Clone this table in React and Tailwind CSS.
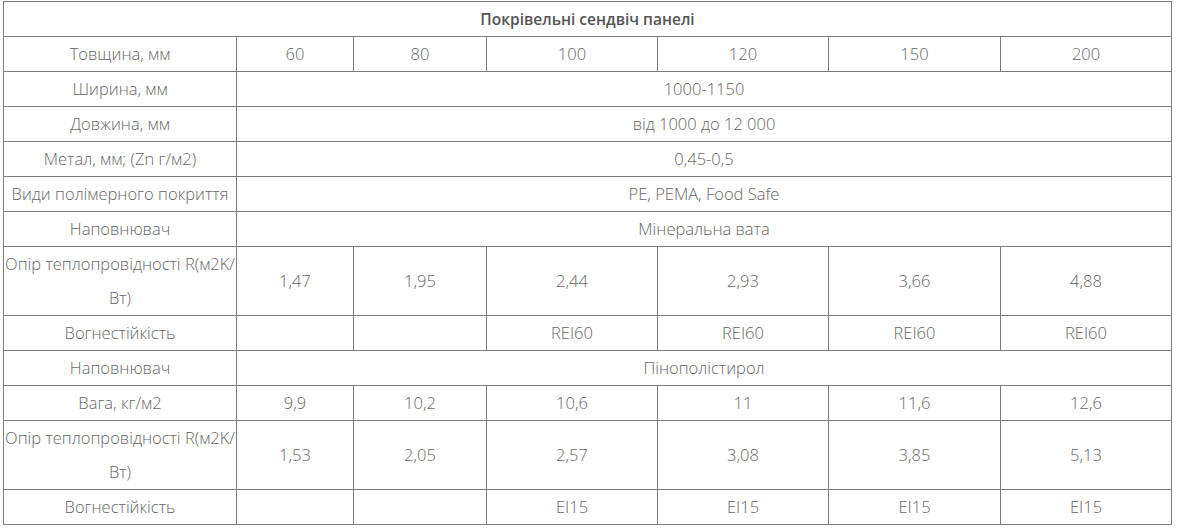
import React from "react";

const sizes = ["60", "80", "100", "120", "150", "200"];

// label, then either a single spanning value or one value per thickness
const rows = [
  ["Ширина, мм", "1000-1150"],
  ["Довжина, мм", "від 1000 до 12 000"],
  ["Метал, мм; (Zn г/м2)", "0,45-0,5"],
  ["Види полімерного покриття", "PE, PEMA, Food Safe"],
  ["Наповнювач", "Мінеральна вата"],
  [<>Опір теплопровідності R(м2K/<wbr />Вт)</>, ["1,47", "1,95", "2,44", "2,93", "3,66", "4,88"]],
  ["Вогнестійкість", ["", "", "REI60", "REI60", "REI60", "REI60"]],
  ["Наповнювач", "Пінополістирол"],
  ["Вага, кг/м2", ["9,9", "10,2", "10,6", "11", "11,6", "12,6"]],
  [<>Опір теплопровідності R(м2K/<wbr />Вт)</>, ["1,53", "2,05", "2,57", "3,08", "3,85", "5,13"]],
  ["Вогнестійкість", ["", "", "EI15", "EI15", "EI15", "EI15"]],
];

const cell = "border border-[#7d7d7d] text-center align-middle leading-[34px] p-0";

export default function App() {
  return (
    <div
      className="min-h-screen bg-white pl-[3px] pt-[1px] text-[16.5px] font-light text-[#666]"
      style={{ fontFamily: '"Open Sans", "Noto Sans", sans-serif' }}
    >
      <table className="table-fixed border-collapse w-[1168px]">
        <colgroup>
          <col className="w-[233px]" />
          <col className="w-[117px]" />
          <col className="w-[133px]" />
          <col className="w-[171px]" />
          <col className="w-[171px]" />
          <col className="w-[172px]" />
          <col className="w-[171px]" />
        </colgroup>
        <tbody>
          <tr>
            <td colSpan={7} className={`${cell} text-[15.5px] font-semibold text-[#555]`}>
              Покрівельні сендвіч панелі
            </td>
          </tr>
          <tr>
            <td className={cell}>Товщина, мм</td>
            {sizes.map((s) => (
              <td key={s} className={cell}>{s}</td>
            ))}
          </tr>
          {rows.map(([label, val], i) => (
            <tr key={i}>
              <td className={cell}>{label}</td>
              {Array.isArray(val) ? (
                val.map((v, j) => (
                  <td key={j} className={cell}>{v}</td>
                ))
              ) : (
                <td colSpan={6} className={cell}>{val}</td>
              )}
            </tr>
          ))}
        </tbody>
      </table>
    </div>
  );
}
